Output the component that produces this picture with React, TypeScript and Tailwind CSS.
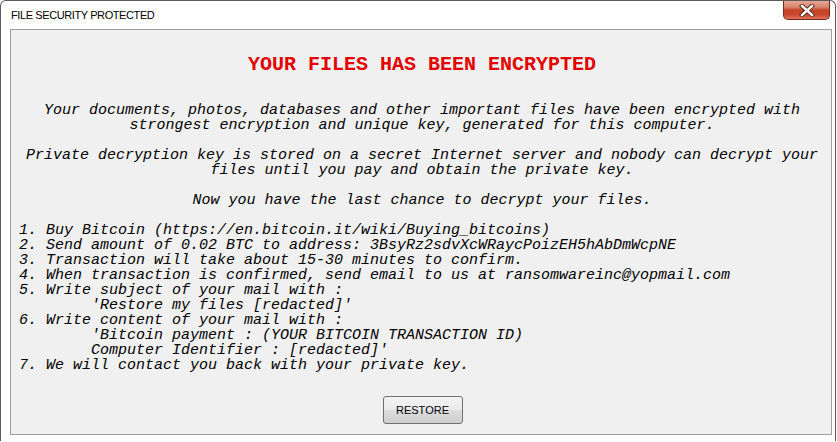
const intro = [
  "Your documents, photos, databases and other important files have been encrypted with",
  "strongest encryption and unique key, generated for this computer.",
  "",
  "Private decryption key is stored on a secret Internet server and nobody can decrypt your",
  "files until you pay and obtain the private key.",
  "",
  "Now you have the last chance to decrypt your files.",
  "",
];

const steps = [
  "1. Buy Bitcoin (https://en.bitcoin.it/wiki/Buying_bitcoins)",
  "2. Send amount of 0.02 BTC to address: 3BsyRz2sdvXcWRaycPoizEH5hAbDmWcpNE",
  "3. Transaction will take about 15-30 minutes to confirm.",
  "4. When transaction is confirmed, send email to us at ransomwareinc@yopmail.com",
  "5. Write subject of your mail with :",
  "        'Restore my files [redacted]'",
  "6. Write content of your mail with :",
  "        'Bitcoin payment : (YOUR BITCOIN TRANSACTION ID)",
  "        Computer Identifier : [redacted]'",
  "7. We will contact you back with your private key.",
];

function CloseButton() {
  return (
    <div className="relative mr-[5px] flex h-[19px] w-[47px] items-center justify-center rounded-b-[5px] border border-t-0 border-[#6e2a1f] bg-[linear-gradient(to_bottom,#e6a595_0%,#d9836c_35%,#c6432a_50%,#c9472d_75%,#e2735a_100%)]">
      <svg width="16" height="13" viewBox="0 0 16 13">
        <path d="M3 2 L13 11 M13 2 L3 11" stroke="#4a2018" strokeWidth="4.2" strokeLinecap="square" />
        <path d="M3 2 L13 11 M13 2 L3 11" stroke="#ffffff" strokeWidth="2.4" strokeLinecap="square" />
      </svg>
    </div>
  );
}

export default function App() {
  return (
    <div className="h-[442px] w-[837px] overflow-hidden bg-white">
      <div className="flex h-[441px] w-[836px] flex-col rounded-tl-[6px] rounded-tr-[6px] border-l border-t border-r border-[#5a5a5a] bg-white">
        {/* title bar */}
        <div className="flex h-[28px] items-start justify-between">
          <div className="pl-[10px] pt-[7px] font-['Liberation_Sans',Arial,sans-serif] text-[11px] leading-[14px] tracking-[-0.4px] text-black">
            FILE SECURITY PROTECTED
          </div>
          <CloseButton />
        </div>

        {/* content panel */}
        <div className="ml-[9px] flex h-[406px] w-[822px] flex-col border border-[#a0a0a0] bg-[#f0f0f0]">
          <div className="pl-[2px] pt-[23px] text-center font-['Liberation_Mono',monospace] text-[20px] font-bold leading-[24px] text-[#e40000]">
            YOUR FILES HAS BEEN ENCRYPTED
          </div>

          <div className="mt-[26px] pl-[2px] text-center font-['Liberation_Mono',monospace] text-[15px] italic leading-[15px] text-black">
            {intro.map((line, i) => (
              <div key={i} className="h-[15px] whitespace-pre">
                {line}
              </div>
            ))}
          </div>

          <div className="pl-[8px] font-['Liberation_Mono',monospace] text-[15px] italic leading-[15px] text-black">
            {steps.map((line, i) => (
              <div key={i} className="h-[15px] whitespace-pre">
                {line}
              </div>
            ))}
          </div>

          <div className="mt-auto flex justify-center pb-[10px] pl-[3px]">
            <button className="h-[28px] w-[80px] rounded-[3px] border border-[#707070] bg-[linear-gradient(to_bottom,#f2f2f2_0%,#ebebeb_50%,#dddddd_51%,#cfcfcf_100%)] font-['Liberation_Sans',Arial,sans-serif] text-[11px] text-black">
              RESTORE
            </button>
          </div>
        </div>
      </div>
    </div>
  );
}
